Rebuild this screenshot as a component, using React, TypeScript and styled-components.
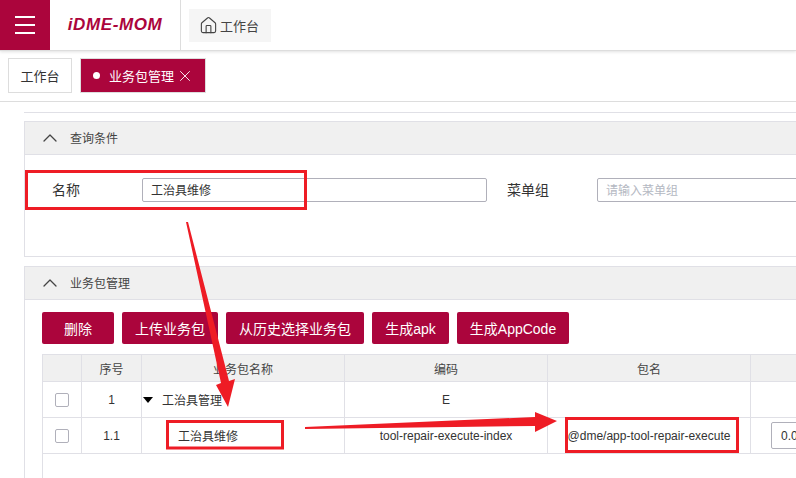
import React from "react";
import styled, { createGlobalStyle } from "styled-components";
import { ChevronUp, House, X } from "lucide-react";

const BRAND = "#ab053c";
const LINE = "#e0e0e6";

const Global = createGlobalStyle`
  html, body {
    margin: 0;
    padding: 0;
    background: #fff;
    overflow: hidden;
  }
  * {
    box-sizing: border-box;
  }
  body {
    font-family: "Liberation Sans", "Noto Sans CJK SC", sans-serif;
    font-size: 12px;
    color: #333;
  }
`;

const Page = styled.div`
  position: relative;
  width: 796px;
  height: 478px;
  overflow: hidden;
`;

const Header = styled.header`
  display: flex;
  height: 51px;
  border-bottom: 1px solid #ddd;
  box-shadow: 0 1px 3px rgba(0, 0, 0, 0.12);
`;

const MenuButton = styled.div`
  display: flex;
  align-items: center;
  justify-content: center;
  width: 50px;
  background: ${BRAND};
`;

const Logo = styled.div`
  display: flex;
  align-items: center;
  justify-content: center;
  width: 131px;
  border-right: 1px solid #ddd;
  color: ${BRAND};
  font-size: 17px;
  font-weight: 700;
  font-style: italic;
  letter-spacing: 0.6px;
`;

const HomeTab = styled.div`
  display: flex;
  align-items: center;
  gap: 2px;
  width: 82px;
  height: 33px;
  margin: 9px 0 0 8px;
  padding-left: 10px;
  background: #f5f5f5;
  font-size: 13px;
  white-space: nowrap;
  color: #444;
`;

const TabBar = styled.div`
  display: flex;
  gap: 8px;
  height: 51px;
  padding: 7px 8px 0;
  border-bottom: 1px solid #ddd;
`;

const Tab = styled.div<{ $active?: boolean; $width: number }>`
  display: flex;
  align-items: center;
  justify-content: ${(p) => (p.$active ? "flex-start" : "center")};
  width: ${(p) => p.$width}px;
  height: 35px;
  padding-left: ${(p) => (p.$active ? 12 : 0)}px;
  border: 1px solid #ddd;
  font-size: 13px;
  white-space: nowrap;
  background: ${(p) => (p.$active ? BRAND : "#fff")};
  color: ${(p) => (p.$active ? "#fff" : "#333")};

  svg {
    margin-left: 2px;
  }
`;

const Dot = styled.span`
  width: 7px;
  height: 7px;
  margin-right: 9px;
  border-radius: 50%;
  background: #fff;
`;

const Content = styled.main`
  margin-left: 24px;
  padding-top: 10px;
`;

const TopRule = styled.div`
  height: 1px;
  margin-bottom: 8px;
  background: ${LINE};
`;

const Panel = styled.section<{ $bodyHeight: number }>`
  width: 820px;
  margin-bottom: 9px;
  border: 1px solid ${LINE};
  border-right: 0;
  min-height: ${(p) => p.$bodyHeight}px;
`;

const PanelHeader = styled.div`
  display: flex;
  align-items: center;
  gap: 8px;
  height: 33px;
  padding: 0 0 1px 13px;
  background: #f0f0f0;
  border-bottom: 1px solid ${LINE};
  color: #444;
`;

const QueryRow = styled.div`
  display: flex;
  align-items: center;
  padding-top: 23px;
`;

const FieldLabel = styled.label<{ $width: number; $indent: number }>`
  flex: none;
  width: ${(p) => p.$width}px;
  padding-left: ${(p) => p.$indent}px;
  padding-bottom: 2px;
  font-size: 14px;
  color: #333;
`;

const TextInput = styled.div<{ $width: number; $placeholder?: boolean }>`
  flex: none;
  display: flex;
  align-items: center;
  width: ${(p) => p.$width}px;
  height: 24px;
  padding: 0 0 1px 8px;
  border: 1px solid #b0b0ba;
  border-radius: 2px;
  font-size: 12px;
  color: ${(p) => (p.$placeholder ? "#b4b8c2" : "#333")};
`;

const Toolbar = styled.div`
  display: flex;
  gap: 8px;
  margin: 12px 0 10px 17px;
`;

const ActionButton = styled.button<{ $width: number }>`
  width: ${(p) => p.$width}px;
  height: 32px;
  padding: 0;
  border: 0;
  border-radius: 2px;
  background: ${BRAND};
  color: #fff;
  font: inherit;
  font-size: 14px;
`;

const Table = styled.div`
  display: grid;
  grid-template-columns: 39px 60px 203px 203px 203px 120px;
  align-content: start;
  margin-left: 17px;
  border-left: 1px solid ${LINE};
  min-height: 130px;
`;

const HeadCell = styled.div`
  display: flex;
  align-items: center;
  justify-content: center;
  height: 28px;
  background: #f0f0f0;
  border-top: 1px solid ${LINE};
  border-right: 1px solid ${LINE};
  border-bottom: 1px solid ${LINE};
  color: #444;
`;

const Cell = styled.div<{ $start?: boolean; $indent?: number }>`
  display: flex;
  align-items: center;
  justify-content: ${(p) => (p.$start ? "flex-start" : "center")};
  gap: 9px;
  height: 36px;
  padding-left: ${(p) => p.$indent ?? 0}px;
  border-right: 1px solid ${LINE};
  border-bottom: 1px solid ${LINE};
  white-space: nowrap;
`;

const Check = styled.span`
  width: 14px;
  height: 14px;
  border: 1px solid #b0b0ba;
  border-radius: 2px;
`;

const Caret = styled.span`
  width: 0;
  height: 0;
  border-left: 5px solid transparent;
  border-right: 5px solid transparent;
  border-top: 6px solid #000;
`;

const NumberBox = styled.div`
  display: flex;
  align-items: center;
  width: 60px;
  height: 27px;
  margin-left: 20px;
  padding-left: 9px;
  border: 1px solid #b0b0ba;
  border-radius: 2px;
`;

const Annotations = styled.svg`
  position: absolute;
  inset: 0;
  pointer-events: none;
`;

const buttons: [string, number][] = [
  ["删除", 72],
  ["上传业务包", 96],
  ["从历史选择业务包", 138],
  ["生成apk", 77],
  ["生成AppCode", 112],
];

const heads = ["", "序号", "业务包名称", "编码", "包名", ""];

export default function App() {
  return (
    <Page>
      <Global />
      <Header>
        <MenuButton>
          <svg width="20" height="18" viewBox="0 0 20 18" fill="#fff">
            <rect y="0" width="20" height="2" />
            <rect y="8" width="20" height="2" />
            <rect y="16" width="20" height="2" />
          </svg>
        </MenuButton>
        <Logo>iDME-MOM</Logo>
        <HomeTab>
          <House size={19} strokeWidth={1.4} />
          工作台
        </HomeTab>
      </Header>
      <TabBar>
        <Tab $width={64}>工作台</Tab>
        <Tab $active $width={126}>
          <Dot />
          业务包管理
          <X size={18} strokeWidth={1.2} />
        </Tab>
      </TabBar>
      <Content>
        <TopRule />
        <Panel $bodyHeight={136}>
          <PanelHeader>
            <ChevronUp size={24} strokeWidth={1.3} />
            查询条件
          </PanelHeader>
          <QueryRow>
            <FieldLabel $width={117} $indent={27}>
              名称
            </FieldLabel>
            <TextInput $width={345}>工治具维修</TextInput>
            <FieldLabel $width={110} $indent={20}>
              菜单组
            </FieldLabel>
            <TextInput $width={250} $placeholder>
              请输入菜单组
            </TextInput>
          </QueryRow>
        </Panel>
        <Panel $bodyHeight={220}>
          <PanelHeader>
            <ChevronUp size={24} strokeWidth={1.3} />
            业务包管理
          </PanelHeader>
          <Toolbar>
            {buttons.map(([label, width]) => (
              <ActionButton key={label} $width={width}>
                {label}
              </ActionButton>
            ))}
          </Toolbar>
          <Table>
            {heads.map((head, i) => (
              <HeadCell key={i}>{head}</HeadCell>
            ))}
            <Cell>
              <Check />
            </Cell>
            <Cell>1</Cell>
            <Cell $start $indent={1}>
              <Caret />
              工治具管理
            </Cell>
            <Cell>E</Cell>
            <Cell />
            <Cell />
            <Cell>
              <Check />
            </Cell>
            <Cell>1.1</Cell>
            <Cell $start $indent={36}>
              工治具维修
            </Cell>
            <Cell>tool-repair-execute-index</Cell>
            <Cell>@dme/app-tool-repair-execute</Cell>
            <Cell $start>
              <NumberBox>0.0.1</NumberBox>
            </Cell>
          </Table>
        </Panel>
      </Content>
      <Annotations width="796" height="478" viewBox="0 0 796 478">
        <g fill="none" stroke="#ee1c25" strokeWidth="3">
          <rect x="26.5" y="171.5" width="279" height="37" />
          <rect x="167.5" y="421.5" width="115" height="26.5" />
          <rect x="566.5" y="418.5" width="171" height="33" />
        </g>
        <g fill="#ee1c25">
          <path d="M186 222 L188 222 L229 381 L235 379 L228 407 L216 385 L221 383 Z" />
          <path d="M305 427 L535 417 L535 412 L557 421 L535 432 L535 426 L305 429 Z" />
        </g>
      </Annotations>
    </Page>
  );
}
